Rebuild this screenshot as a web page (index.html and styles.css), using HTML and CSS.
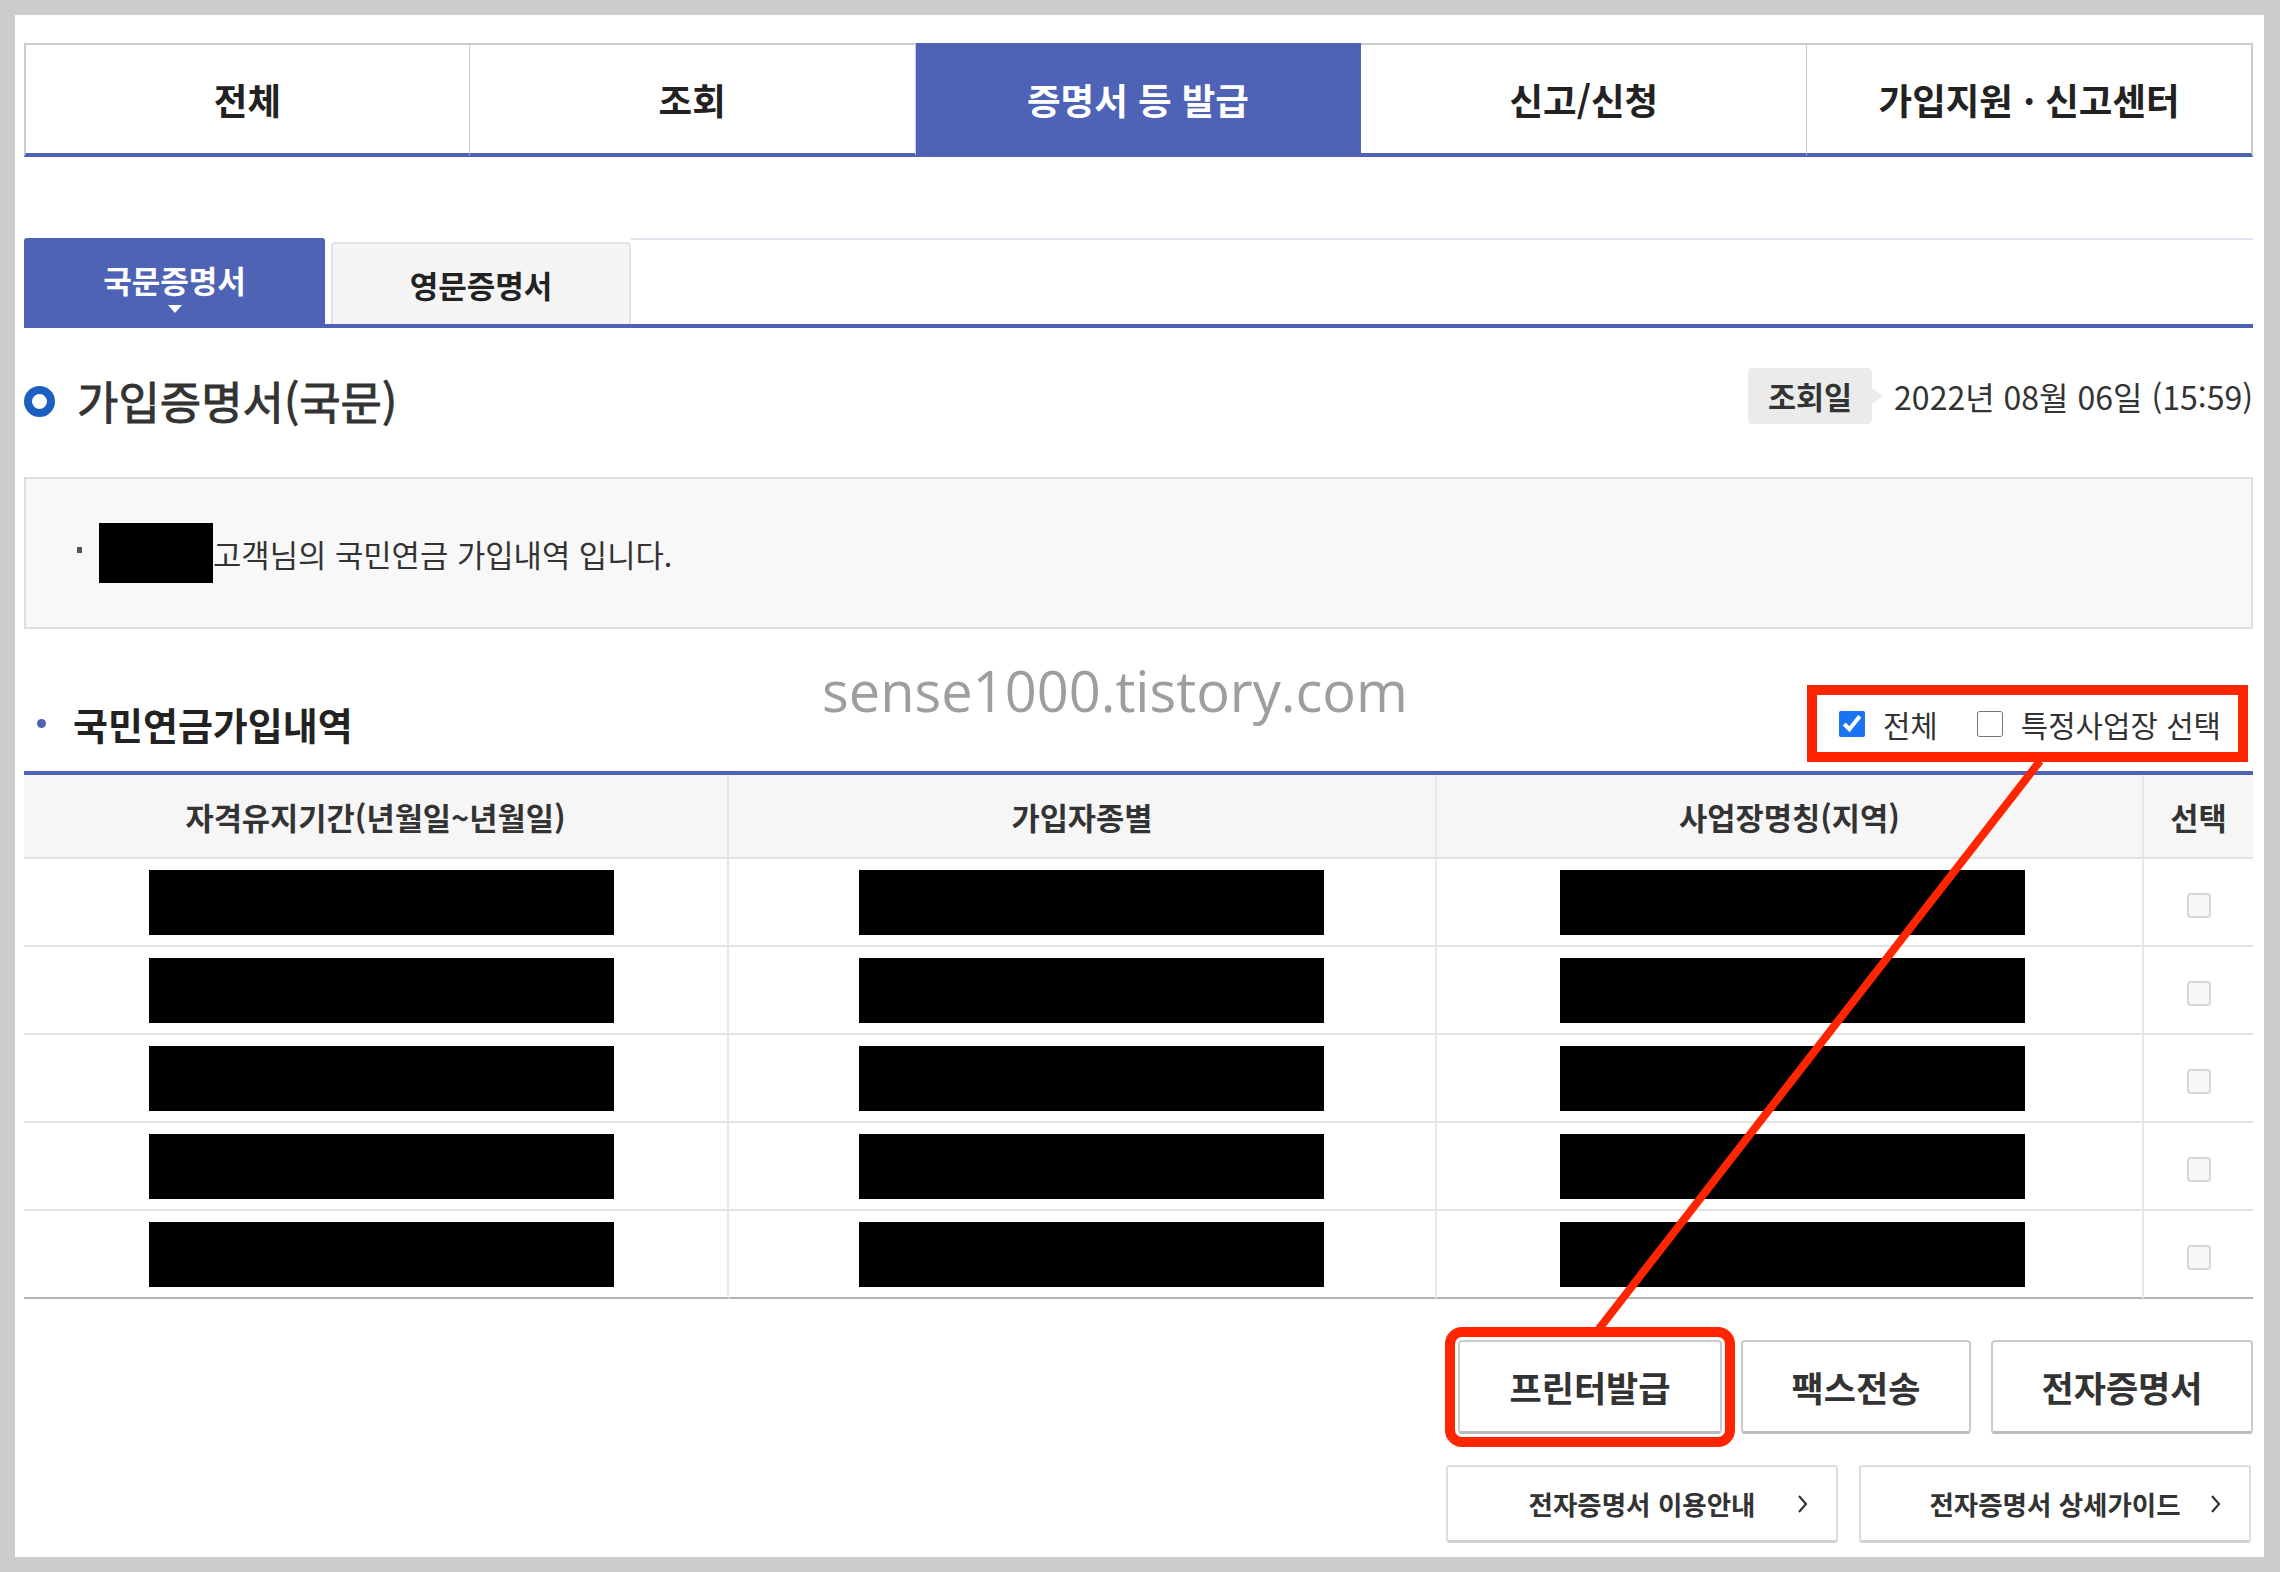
FILE: index.html
```html
<!DOCTYPE html>
<html lang="ko">
<head>
    <meta charset="UTF-8">
    <meta name="viewport" content="width=device-width, initial-scale=1.0">
    <title>가입증명서(국문)</title>
    <link rel="stylesheet" href="styles.css">
</head>
<body>

    <div class="page">

        <!-- Main menu tabs -->
        <ul class="main-tabs">
            <li class="main-tab">전체</li>
            <li class="main-tab">조회</li>
            <li class="main-tab active">증명서 등 발급</li>
            <li class="main-tab">신고/신청</li>
            <li class="main-tab">가입지원 · 신고센터</li>
        </ul>

        <!-- Certificate language tabs -->
        <div class="sub-tabs">
            <div class="sub-tab active"><span>국문증명서</span><i class="caret"></i></div>
            <div class="sub-tab">영문증명서</div>
            <div class="sub-tab-rest"></div>
        </div>

        <!-- Title -->
        <div class="title-row">
            <h2 class="doc-title"><span class="ring"></span>가입증명서(국문)</h2>
            <div class="query-date">
                <span class="query-label">조회일</span>
                <span class="query-value">2022년 08월 06일 (15:59)</span>
            </div>
        </div>

        <!-- Notice -->
        <div class="info-box">
            <span class="info-bullet"></span>
            <span class="name-mask"></span>
            <span class="info-text">고객님의 국민연금 가입내역 입니다.</span>
        </div>

        <!-- List header -->
        <div class="section-head">
            <h3 class="section-title"><span class="section-dot"></span>국민연금가입내역</h3>
            <div class="check-group marked">
                <label class="check"><input type="checkbox" checked> 전체</label>
                <label class="check"><input type="checkbox"> 특정사업장 선택</label>
            </div>
        </div>

        <!-- History table -->
        <table class="history">
            <colgroup>
                <col class="col-period">
                <col class="col-type">
                <col class="col-place">
                <col class="col-select">
            </colgroup>
            <thead>
                <tr>
                    <th>자격유지기간(년월일~년월일)</th>
                    <th>가입자종별</th>
                    <th>사업장명칭(지역)</th>
                    <th>선택</th>
                </tr>
            </thead>
            <tbody>
                <tr>
                    <td class="cell-period"><span class="mask"></span></td>
                    <td class="cell-type"><span class="mask"></span></td>
                    <td class="cell-place"><span class="mask"></span></td>
                    <td><input type="checkbox" class="row-check"></td>
                </tr>
                <tr>
                    <td class="cell-period"><span class="mask"></span></td>
                    <td class="cell-type"><span class="mask"></span></td>
                    <td class="cell-place"><span class="mask"></span></td>
                    <td><input type="checkbox" class="row-check"></td>
                </tr>
                <tr>
                    <td class="cell-period"><span class="mask"></span></td>
                    <td class="cell-type"><span class="mask"></span></td>
                    <td class="cell-place"><span class="mask"></span></td>
                    <td><input type="checkbox" class="row-check"></td>
                </tr>
                <tr>
                    <td class="cell-period"><span class="mask"></span></td>
                    <td class="cell-type"><span class="mask"></span></td>
                    <td class="cell-place"><span class="mask"></span></td>
                    <td><input type="checkbox" class="row-check"></td>
                </tr>
                <tr>
                    <td class="cell-period"><span class="mask"></span></td>
                    <td class="cell-type"><span class="mask"></span></td>
                    <td class="cell-place"><span class="mask"></span></td>
                    <td><input type="checkbox" class="row-check"></td>
                </tr>
            </tbody>
        </table>

        <!-- Issue buttons -->
        <div class="btn-row">
            <button class="btn btn-print marked">프린터발급</button>
            <button class="btn btn-fax">팩스전송</button>
            <button class="btn btn-digital">전자증명서</button>
        </div>

        <!-- Guide links -->
        <div class="link-row">
            <a class="guide-link" href="#">
                <span></span>
                <span class="guide-label">전자증명서 이용안내</span>
                <svg class="chev" width="12" height="22" viewBox="0 0 12 22"><polyline points="2,3 9,11 2,19" fill="none" stroke="#333" stroke-width="2.2"/></svg>
            </a>
            <a class="guide-link" href="#">
                <span></span>
                <span class="guide-label">전자증명서 상세가이드</span>
                <svg class="chev" width="12" height="22" viewBox="0 0 12 22"><polyline points="2,3 9,11 2,19" fill="none" stroke="#333" stroke-width="2.2"/></svg>
            </a>
        </div>

        <div class="watermark">sense1000.tistory.com</div>
    </div>

    <!-- Red pointer line from the checkbox group to the print button -->
    <svg class="pointer" width="2280" height="1572" viewBox="0 0 2280 1572">
        <line x1="2040" y1="761" x2="1595" y2="1334" stroke="#ff2500" stroke-width="8"/>
    </svg>

</body>
</html>
```

FILE: styles.css
```css
/* Basic styling */
* {
    box-sizing: border-box;
}

body {
    margin: 0;
    height: 1572px;
    background-color: #cccccc;
    font-family: "Noto Sans CJK KR", "Noto Sans", sans-serif;
    color: #333;
    position: relative;
    overflow: hidden;
}

.page {
    position: relative;
    height: 1542px;
    margin: 15px 16px 0 15px;
    padding: 28px 11px 0 9px;
    background-color: #fff;
}

/* Main tabs */
.main-tabs {
    display: grid;
    grid-template-columns: repeat(5, 1fr);
    margin: 0;
    padding: 0;
    list-style: none;
}

.main-tab {
    height: 114px;
    display: flex;
    align-items: center;
    justify-content: center;
    border-top: 2px solid #c7ced3;
    border-right: 1px solid #c7ced3;
    border-bottom: 4px solid #4f63b6;
    font-size: 36.5px;
    font-weight: 700;
    color: #222;
}

.main-tab:first-child {
    border-left: 2px solid #c7ced3;
}

.main-tab:last-child {
    border-right: 2px solid #c7ced3;
}

.main-tab.active {
    background-color: #4f63b6;
    border-top-color: #4f63b6;
    border-right-color: #4f63b6;
    color: #fff;
}

/* Sub tabs */
.sub-tabs {
    display: flex;
    align-items: flex-end;
    margin-top: 81px;
    border-bottom: 4px solid #4f63b6;
}

.sub-tab {
    width: 300px;
    height: 82px;
    display: flex;
    align-items: center;
    justify-content: center;
    margin-left: 6px;
    background-color: #f5f5f5;
    border: 2px solid #e3e3e3;
    border-bottom: none;
    border-radius: 4px 4px 0 0;
    font-size: 31px;
    font-weight: 700;
    color: #222;
}

.sub-tab.active {
    width: 301px;
    height: 86px;
    margin-left: 0;
    flex-direction: column;
    justify-content: flex-start;
    padding-top: 22px;
    background-color: #4f63b6;
    border: none;
    border-radius: 3px 3px 0 0;
    color: #fff;
    line-height: 40px;
}

.caret {
    margin-top: 5px;
    border-left: 7px solid transparent;
    border-right: 7px solid transparent;
    border-top: 8px solid #fff;
}

.sub-tab-rest {
    flex: 1;
    align-self: stretch;
    border-top: 2px solid #dfe4ee;
}

/* Title */
.title-row {
    display: flex;
    align-items: center;
    justify-content: space-between;
    height: 56px;
    margin-top: 40px;
}

.doc-title {
    display: flex;
    align-items: center;
    gap: 22px;
    margin: 10px 0 0 0;
    font-size: 45px;
    font-weight: 400;
    line-height: 1.2;
    color: #333;
    -webkit-text-stroke: 0.9px #333;
}

.ring {
    width: 31px;
    height: 31px;
    border: 8px solid #1c5fc0;
    border-radius: 50%;
}

.query-date {
    display: flex;
    align-items: center;
}

.query-label {
    position: relative;
    height: 56px;
    padding: 0 20px;
    background-color: #ebebeb;
    border-radius: 4px;
    font-size: 30.5px;
    font-weight: 700;
    line-height: 56px;
    color: #333;
}

.query-label::after {
    content: "";
    position: absolute;
    right: -11px;
    top: 20px;
    border-top: 8px solid transparent;
    border-bottom: 8px solid transparent;
    border-left: 11px solid #ebebeb;
}

.query-value {
    margin-left: 22px;
    font-size: 32px;
    color: #333;
}

/* Notice box */
.info-box {
    display: flex;
    align-items: center;
    height: 152px;
    margin-top: 53px;
    padding-left: 51px;
    background-color: #f8f8f8;
    border: 2px solid #dedede;
}

.info-bullet {
    width: 5px;
    height: 6px;
    margin-top: -6px;
    margin-right: 17px;
    background-color: #555;
}

.name-mask {
    width: 114px;
    height: 60px;
    background-color: #000;
}

.info-text {
    font-size: 30.8px;
    color: #333;
}

/* List header */
.section-head {
    display: flex;
    align-items: center;
    justify-content: space-between;
    height: 77px;
    margin-top: 56px;
}

.section-title {
    display: flex;
    align-items: center;
    margin: 0;
    font-size: 38px;
    font-weight: 700;
    color: #222;
}

.section-dot {
    width: 9px;
    height: 9px;
    margin: 0 27px 0 13px;
    border-radius: 50%;
    background-color: #4f63b6;
}

.check-group {
    display: flex;
    align-items: center;
    height: 77px;
    margin-right: 5px;
    padding: 0 17px 0 22px;
}

.check {
    display: flex;
    align-items: center;
    gap: 18px;
    font-size: 29.8px;
    color: #333;
}

.check + .check {
    margin-left: 39px;
}

.check input {
    width: 26px;
    height: 26px;
    margin: 0;
    accent-color: #1a73f0;
}

/* Annotation marks */
.check-group.marked {
    border: 10px solid #ff2500;
}

.btn.marked {
    outline: 10px solid #ff2500;
    outline-offset: 3px;
}

.pointer {
    position: absolute;
    top: 0;
    left: 0;
    pointer-events: none;
}

/* Table */
.history {
    width: 100%;
    margin-top: 9px;
    border-collapse: separate;
    border-spacing: 0;
    border-top: 4px solid #4f63b6;
    table-layout: fixed;
}

.col-period { width: 705px; }
.col-type { width: 708px; }
.col-place { width: 707px; }
.col-select { width: 109px; }

.history th {
    height: 84px;
    padding: 0;
    background-color: #f6f6f6;
    border-bottom: 2px solid #e2e2e2;
    border-right: 2px solid #e8e8e8;
    font-size: 30.7px;
    font-weight: 700;
    color: #333;
}

.history td {
    height: 88px;
    padding: 0;
    text-align: center;
    vertical-align: middle;
    border-bottom: 2px solid #e2e2e2;
    border-right: 2px solid #e8e8e8;
}

.history td.cell-period { padding-left: 12px; }
.history td.cell-type { padding-left: 18px; }
.history td.cell-place { padding-left: 6px; }

.history th:last-child,
.history td:last-child {
    border-right: none;
}

.history tbody tr:last-child td {
    border-bottom-color: #b3b3b3;
}

.mask {
    display: block;
    width: 465px;
    height: 65px;
    margin: 0 auto;
    background-color: #000;
}

.row-check {
    appearance: none;
    width: 24px;
    height: 25px;
    margin: 6px 0 0 0;
    background-color: #f7f7f7;
    border: 2px solid #d6d6d6;
    border-radius: 4px;
    vertical-align: middle;
}

/* Buttons */
.btn-row {
    display: flex;
    justify-content: flex-end;
    gap: 19px;
    margin-top: 41px;
}

.btn {
    height: 94px;
    background-color: #fff;
    border: 2px solid #cbcbcb;
    border-bottom: 3px solid #bcbcbc;
    border-radius: 4px;
    font-family: inherit;
    font-size: 35px;
    font-weight: 700;
    color: #333;
}

.btn-print { width: 264px; }
.btn-fax { width: 230px; margin-right: 1px; }
.btn-digital { width: 262px; }

.link-row {
    display: flex;
    justify-content: flex-end;
    gap: 21px;
    margin-top: 31px;
    padding-right: 2px;
}

.guide-link {
    display: grid;
    grid-template-columns: 1fr auto 1fr;
    align-items: center;
    width: 392px;
    height: 78px;
    background-color: #fff;
    border: 2px solid #dcdcdc;
    border-bottom: 3px solid #d2d2d2;
    border-radius: 3px;
    font-size: 26.5px;
    font-weight: 700;
    color: #333;
    text-decoration: none;
}

.chev {
    justify-self: end;
    margin-right: 27px;
}

/* Watermark */
.watermark {
    position: absolute;
    top: 647px;
    left: 807px;
    font-family: "Open Sans", sans-serif;
    font-size: 56px;
    line-height: 56px;
    color: #9e9e9e;
}
```
